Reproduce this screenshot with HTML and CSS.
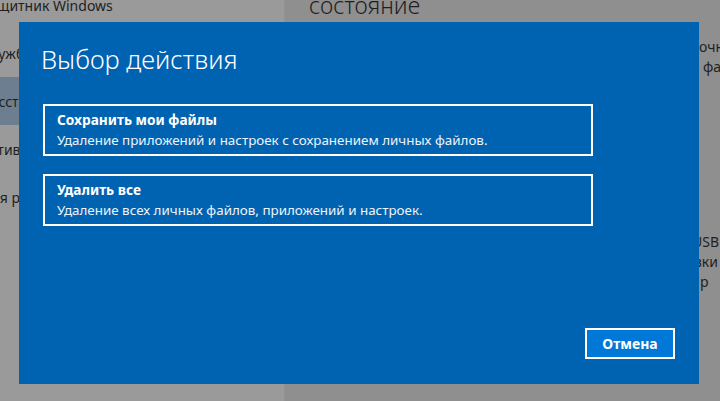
FILE: index.html
```html
<!DOCTYPE html>
<html lang="ru">
<head>
    <meta charset="UTF-8">
    <meta name="viewport" content="width=device-width, initial-scale=1.0">
    <title>Параметры - Восстановление</title>
    <link rel="stylesheet" href="styles.css">
</head>
<body>
    <div class="settings">
        <!-- Левая панель навигации -->
        <ul class="nav">
            <li><span>Защитник Windows</span></li>
            <li><span>Служба архивации</span></li>
            <li class="active"><span>Восстановление</span></li>
            <li><span>Активация</span></li>
            <li><span>Для разработчиков</span></li>
        </ul>

        <!-- Основная часть -->
        <div class="main">
            <h1>Вернуть компьютер в исходное<br>состояние</h1>
            <div class="side">
                <p class="l1">очно</p>
                <p class="l2">файлы</p>
                <p class="l3">USB</p>
                <p class="l4">зки</p>
                <p class="l5">р</p>
            </div>
        </div>
    </div>

    <!-- Диалог выбора действия -->
    <div class="dialog">
        <h2>Выбор действия</h2>
        <div class="options">
            <button class="option">
                <span class="option-title">Сохранить мои файлы</span>
                <span class="option-desc">Удаление приложений и настроек с сохранением личных файлов.</span>
            </button>
            <button class="option">
                <span class="option-title">Удалить все</span>
                <span class="option-desc">Удаление всех личных файлов, приложений и настроек.</span>
            </button>
        </div>
        <div class="actions">
            <button class="cancel">Отмена</button>
        </div>
    </div>
</body>
</html>
```

FILE: styles.css
```css
body {
    margin: 0;
    width: 720px;
    height: 401px;
    overflow: hidden;
    position: relative;
    font-family: "Noto Sans", "Open Sans", sans-serif;
    color: #1f1f1f;
    background-color: #8f8f8f;
}
.settings {
    display: grid;
    grid-template-columns: 285px 1fr;
    height: 100%;
}
.nav {
    list-style: none;
    margin: 0;
    padding: 0;
    background-color: #9a9a9a;
    border-right: 1px solid #929292;
    overflow: hidden;
}
.nav li {
    height: 48px;
    display: flex;
    align-items: center;
    font-size: 14px;
    white-space: nowrap;
}
.nav li:first-child {
    margin-top: -19px;
}
.nav li span {
    margin-left: -19px;
}
.nav li.active {
    background-color: #6d7e90;
}
.main {
    padding-left: 24px;
    overflow: hidden;
}
.main h1 {
    margin: -40px 0 0;
    font-size: 23px;
    font-weight: 300;
    line-height: 30px;
    white-space: nowrap;
}
.side {
    margin-left: 389px;
    font-size: 14px;
    line-height: 20px;
    white-space: nowrap;
}
.side p {
    margin: 0;
}
.side .l1 {
    margin-top: 17px;
    padding-left: 1px;
}
.side .l2 {
    padding-left: 5px;
}
.side .l3 {
    margin-top: 155px;
    margin-left: -6px;
}
.side .l4 {
    margin-left: -3px;
}
.side .l5 {
    padding-left: 2px;
}

/* Диалог поверх окна параметров */
.dialog {
    position: absolute;
    left: 19px;
    top: 22px;
    width: 680px;
    height: 362px;
    box-sizing: border-box;
    padding: 20px 24px 25px;
    background-color: #0063b1;
    color: white;
    display: flex;
    flex-direction: column;
}
.dialog h2 {
    margin: 0 0 0 -2px;
    font-size: 25.5px;
    font-weight: 300;
    line-height: 34px;
}
.options {
    display: flex;
    flex-direction: column;
    gap: 18px;
    margin-top: 28px;
}
.option {
    width: 550px;
    height: 52px;
    box-sizing: border-box;
    border: 2px solid white;
    background: none;
    color: white;
    font-family: inherit;
    text-align: left;
    padding: 4px 12px 0;
    display: flex;
    flex-direction: column;
    cursor: pointer;
}
.option-title {
    font-size: 13.7px;
    font-weight: 700;
    line-height: 20px;
}
.option-desc {
    font-size: 13.4px;
    line-height: 20px;
    color: #eef3f9;
}
.actions {
    margin-top: auto;
    display: flex;
    justify-content: flex-end;
}
.cancel {
    width: 90px;
    height: 31px;
    border: 2px solid white;
    background-color: #0078d7;
    color: white;
    font-family: inherit;
    font-size: 14px;
    font-weight: 700;
    cursor: pointer;
}
```
